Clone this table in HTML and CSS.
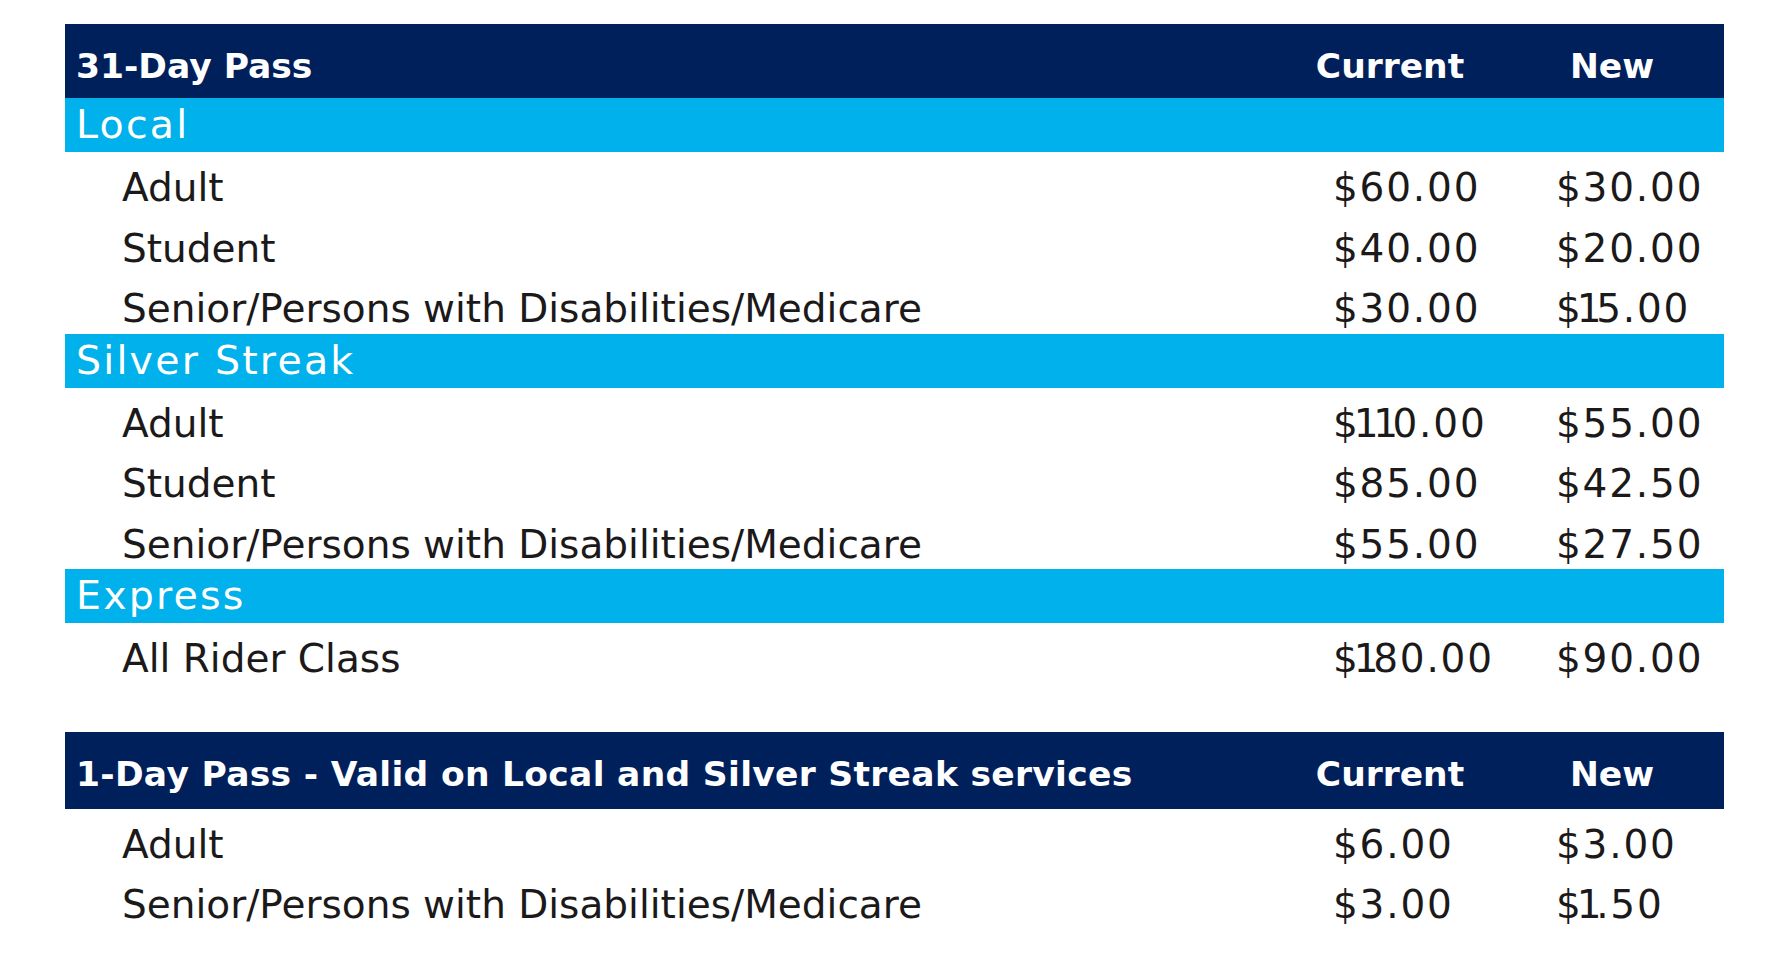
FILE: index.html
```html
<!DOCTYPE html>
<html lang="en">
<head>
<meta charset="utf-8">
<title>Pass Fares</title>
<link rel="stylesheet" href="styles.css">
</head>
<body>
<main class="fares">
  <table class="fare-table">
    <colgroup>
      <col class="col-label">
      <col class="col-current">
      <col class="col-new">
    </colgroup>
    <thead>
      <tr class="head-row">
        <th class="head-title">31-Day Pass</th>
        <th class="head-col">Current</th>
        <th class="head-col">New</th>
      </tr>
    </thead>
    <tbody>
      <tr class="band-row"><td colspan="3">Local</td></tr>
      <tr class="fare-row"><td class="label">Adult</td><td class="price price-current">$60.00</td><td class="price price-new">$30.00</td></tr>
      <tr class="fare-row"><td class="label">Student</td><td class="price price-current">$40.00</td><td class="price price-new">$20.00</td></tr>
      <tr class="fare-row"><td class="label">Senior/Persons with Disabilities/Medicare</td><td class="price price-current">$30.00</td><td class="price price-new"><span class="pre-one">$</span><span class="one">1</span>5.00</td></tr>
      <tr class="band-row"><td colspan="3">Silver Streak</td></tr>
      <tr class="fare-row"><td class="label">Adult</td><td class="price price-current"><span class="pre-one">$</span><span class="one">1</span><span class="one">1</span>0.00</td><td class="price price-new">$55.00</td></tr>
      <tr class="fare-row"><td class="label">Student</td><td class="price price-current">$85.00</td><td class="price price-new">$42.50</td></tr>
      <tr class="fare-row"><td class="label">Senior/Persons with Disabilities/Medicare</td><td class="price price-current">$55.00</td><td class="price price-new">$27.50</td></tr>
      <tr class="band-row"><td colspan="3">Express</td></tr>
      <tr class="fare-row"><td class="label">All Rider Class</td><td class="price price-current"><span class="pre-one">$</span><span class="one">1</span>80.00</td><td class="price price-new">$90.00</td></tr>
    </tbody>
  </table>

  <table class="fare-table fare-table-second">
    <colgroup>
      <col class="col-label">
      <col class="col-current">
      <col class="col-new">
    </colgroup>
    <thead>
      <tr class="head-row head-row-second">
        <th class="head-title">1-Day Pass - Valid on Local and Silver Streak services</th>
        <th class="head-col">Current</th>
        <th class="head-col">New</th>
      </tr>
    </thead>
    <tbody>
      <tr class="fare-row"><td class="label">Adult</td><td class="price price-current">$6.00</td><td class="price price-new">$3.00</td></tr>
      <tr class="fare-row"><td class="label">Senior/Persons with Disabilities/Medicare</td><td class="price price-current">$3.00</td><td class="price price-new"><span class="pre-one">$</span><span class="one">1</span>.50</td></tr>
    </tbody>
  </table>
</main>
</body>
</html>
```

FILE: styles.css
```css
html, body {
  margin: 0;
  padding: 0;
  background: #ffffff;
}

body {
  font-family: "DejaVu Sans", "Liberation Sans", sans-serif;
  font-size: 39px;
  color: #1b1919;
}

.fares {
  padding: 24px 0 0 65px;
}

.fare-table {
  width: 1659px;
  table-layout: fixed;
  border-collapse: collapse;
  border-spacing: 0;
}

.fare-table-second {
  margin-top: 48px;
}

.col-label { width: 1215px; }
.col-current { width: 220px; }
.col-new { width: 224px; }

.fare-table th,
.fare-table td {
  padding: 0;
  white-space: nowrap;
}

/* Navy header rows */
.head-row th {
  background: #00205c;
  color: #ffffff;
  font-weight: bold;
  font-size: 34.5px;
  line-height: 40px;
  padding-top: 22px;
  padding-bottom: 12px;
}

.head-row-second th {
  padding-bottom: 15px;
}

.head-title {
  text-align: left;
  padding-left: 11px !important;
}

.head-row-second .head-title {
  letter-spacing: 0.3px;
}

.head-col {
  text-align: center;
}

/* Cyan section bands */
.band-row td {
  background: #00b1eb;
  color: #ffffff;
  font-size: 39.5px;
  letter-spacing: 2.2px;
  line-height: 45px;
  padding: 4px 0 5px 11px;
}

/* Fare rows */
.fare-row td {
  line-height: 45px;
  padding-top: 13px;
  padding-bottom: 2.5px;
}

.label {
  padding-left: 57px !important;
}

.price {
  letter-spacing: 1.8px;
}

/* the reference face draws a narrow figure one */
.pre-one {
  letter-spacing: -4px;
}

.one {
  letter-spacing: -5.5px;
}

.price-current {
  padding-left: 53px !important;
}

.price-new {
  padding-left: 56px !important;
}
```
